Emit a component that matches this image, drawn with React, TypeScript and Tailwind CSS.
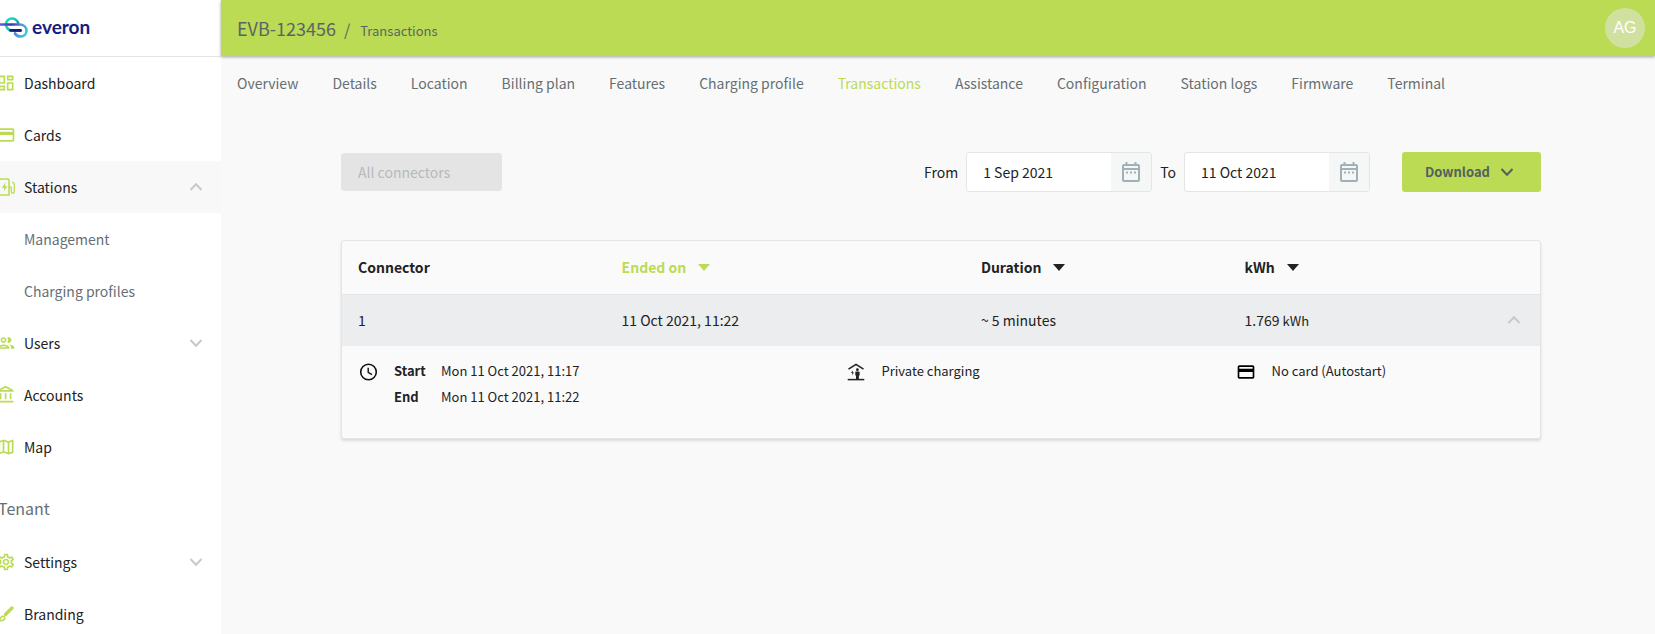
import type { ReactNode } from 'react';
import {
  MdCreditCard,
  MdOutlineAccountBalance,
  MdOutlineDashboard,
  MdOutlineMap,
  MdOutlinePeople,
  MdOutlineSettings,
} from 'react-icons/md';

function Logo() {
  return (
    <svg width="28" height="22" viewBox="0 0 28 22" fill="none" strokeLinecap="round" aria-hidden="true">
      <defs>
        <linearGradient id="loopA" x1="6" y1="2" x2="20" y2="13" gradientUnits="userSpaceOnUse">
          <stop offset="0" stopColor="#1fe0b8" />
          <stop offset="0.5" stopColor="#17c3b4" />
          <stop offset="1" stopColor="#152a86" />
        </linearGradient>
        <linearGradient id="loopB" x1="0" y1="7" x2="27" y2="20" gradientUnits="userSpaceOnUse">
          <stop offset="0" stopColor="#6a5ae6" />
          <stop offset="0.35" stopColor="#3d37a8" />
          <stop offset="0.65" stopColor="#5a8be8" />
          <stop offset="1" stopColor="#1fe0d0" />
        </linearGradient>
      </defs>
      <path d="M18 5.5C16.5 2.6 14.4 1.5 12 1.5C8.700 1.500 6 4 6 7.300C6 11 8.700 13.500 12 13.500H20.500" stroke="url(#loopA)" strokeWidth="2.600" />
      <path d="M-2 7.500H19.500C23.500 7.500 26.500 10 26.500 13.500C26.500 17 24 19.500 20.800 19.500C18 19.500 16 18.300 15 16.300" stroke="url(#loopB)" strokeWidth="2.600" />
      <path d="M10.500 13.400H20.500" stroke="#0f1f7c" strokeWidth="2.600" />
    </svg>
  );
}

function StationIcon() {
  return (
    <svg width="20" height="20" viewBox="0 0 20 20" fill="none" stroke="currentColor" strokeWidth="1.600" className="-ml-1 shrink-0" aria-hidden="true">
      <path d="M3 18V3.500C3 2.500 3.700 2 4.500 2H11.500C12.400 2 13 2.600 13 3.500V18Z" />
      <path d="M13 10H14.300C15 10 15.300 10.500 15.300 11.200V14.500C15.300 16.800 18.300 16.800 18.300 14.500V7C18.300 6 17.500 5.500 16 5" strokeWidth="1.300" />
      <path d="M9.500 5.500L5.800 10.800H8.200L7.800 14.500L11.300 9.200H9L9.500 5.500Z" fill="currentColor" stroke="none" />
    </svg>
  );
}

function BrushIcon() {
  return (
    <svg width="20" height="20" viewBox="0 0 20 20" fill="none" className="-ml-1 shrink-0" aria-hidden="true">
      <path d="M9.500 10.500L16 4" stroke="currentColor" strokeWidth="3.400" strokeLinecap="round" />
      <path d="M6.600 12.200C8.300 12.200 9 13.300 8.700 14.500C8.300 16.300 6.500 17 3 16.600C4.600 16 4.200 12.400 6.600 12.200Z" stroke="currentColor" strokeWidth="1.500" />
    </svg>
  );
}

function Chevron({ up = false, className = '' }: { up?: boolean; className?: string }) {
  return (
    <svg width="14" height="10" viewBox="0 0 14 10" fill="none" stroke="currentColor" strokeWidth="2" className={className} aria-hidden="true">
      <path d={up ? 'M1.500 8L7 2.200L12.500 8' : 'M1.500 2L7 7.800L12.500 2'} />
    </svg>
  );
}

function CalendarIcon() {
  return (
    <svg width="20" height="22" viewBox="0 0 20 22" fill="none" stroke="currentColor" strokeWidth="2" aria-hidden="true">
      <rect x="2" y="4" width="16" height="16" rx="1" />
      <path d="M5.500 1V4M14.500 1V4M2 8H18" />
      <path d="M5 11.500H7M9 11.500H11M13 11.500H15" />
    </svg>
  );
}

function ClockIcon() {
  return (
    <svg width="20" height="20" viewBox="0 0 20 20" fill="none" stroke="#111" strokeWidth="1.600" aria-hidden="true">
      <circle cx="10.500" cy="10" r="7.800" />
      <path d="M10.200 5.800V10.300L14 12.600" strokeWidth="1.400" />
    </svg>
  );
}

function PrivateIcon() {
  return (
    <svg width="20" height="20" viewBox="0 0 20 20" fill="none" stroke="#222" aria-hidden="true">
      <path d="M2.500 7.200L10 2.400L17.500 7.200" strokeWidth="1.600" />
      <path d="M1.700 17.600H18.300" strokeWidth="1.500" />
      <circle cx="11.400" cy="7.700" r="1.400" fill="#222" stroke="none" />
      <path d="M9.300 10C9.300 9.600 9.600 9.400 10 9.400H12.800C13.300 9.400 13.600 9.700 13.600 10.100V13.500H12.900V17H10V13.500H9.300Z" fill="#222" stroke="none" />
      <path d="M6.800 8.200L5 11H6.300L6 13.300L8 10.400H6.700Z" fill="#222" stroke="none" />
    </svg>
  );
}

type NavItem = {
  label: string;
  icon?: ReactNode;
  chevron?: 'up' | 'down';
  active?: boolean;
  child?: boolean;
};

const iconClass = '-ml-1 size-5 shrink-0';

const mainNav: NavItem[] = [
  { label: 'Dashboard', icon: <MdOutlineDashboard className={iconClass} /> },
  { label: 'Cards', icon: <MdCreditCard className={iconClass} /> },
  { label: 'Stations', icon: <StationIcon />, chevron: 'up', active: true },
  { label: 'Management', child: true },
  { label: 'Charging profiles', child: true },
  { label: 'Users', icon: <MdOutlinePeople className={iconClass} />, chevron: 'down' },
  { label: 'Accounts', icon: <MdOutlineAccountBalance className={iconClass} /> },
  { label: 'Map', icon: <MdOutlineMap className={iconClass} /> },
];

const tenantNav: NavItem[] = [
  { label: 'Settings', icon: <MdOutlineSettings className={iconClass} />, chevron: 'down' },
  { label: 'Branding', icon: <BrushIcon /> },
];

const tabs = [
  'Overview',
  'Details',
  'Location',
  'Billing plan',
  'Features',
  'Charging profile',
  'Transactions',
  'Assistance',
  'Configuration',
  'Station logs',
  'Firmware',
  'Terminal',
];

function NavList({ items }: { items: NavItem[] }) {
  return (
    <ul>
      {items.map((item) => (
        <li key={item.label}>
          <a href="#" className={`flex h-13 items-center pr-[18px] ${item.active ? 'bg-[#f8f8f8]' : ''}`}>
            <span className="flex w-6 shrink-0 text-[#bbdb55]">{item.icon}</span>
            <span className={item.child ? 'text-[#666f73]' : 'text-[#222]'}>{item.label}</span>
            {item.chevron && <Chevron up={item.chevron === 'up'} className="ml-auto text-[#c8c8c8]" />}
          </a>
        </li>
      ))}
    </ul>
  );
}

function DateField({ id, label, value }: { id: string; label: string; value: string }) {
  return (
    <div className="flex items-center gap-2">
      <label htmlFor={id}>{label}</label>
      <div className="flex h-10 w-[186px] overflow-hidden rounded-[3px] border border-[#e4e6e6] bg-white">
        <input id={id} type="text" defaultValue={value} className="min-w-0 flex-1 pl-4 outline-none" />
        <button type="button" aria-label={`Pick date: ${label}`} className="flex w-10 items-center justify-center bg-[#f5f6f6] text-[#9fb1b4]">
          <CalendarIcon />
        </button>
      </div>
    </div>
  );
}

function SortButton({ label, active = false }: { label: string; active?: boolean }) {
  return (
    <button type="button" className={`flex items-center gap-3 font-bold ${active ? 'text-[#bbdb55]' : 'text-[#222]'}`}>
      {label}
      <svg width="12" height="7" viewBox="0 0 12 7" fill="currentColor" aria-hidden="true">
        <path d="M0 0H12L6 7Z" />
      </svg>
    </button>
  );
}

export default function App() {
  return (
    <div className="flex h-screen overflow-hidden bg-[#f9f9f9] font-['Noto_Sans_CJK_SC','Noto_Sans',sans-serif] text-[14px] leading-6 text-[#222]">
      <aside className="w-[221px] shrink-0 overflow-hidden bg-white">
        <div className="flex h-[57px] items-center gap-1 border-b border-[#e4e4e4]">
          <Logo />
          <span className="pb-[2px] font-[Lato,sans-serif] text-[19px] font-bold text-[#14207f]">everon</span>
        </div>
        <nav aria-label="Main">
          <NavList items={mainNav} />
          <h2 className="-ml-[2px] flex h-[63px] items-center pt-[6px] text-[16px] text-[#666f73]">Tenant</h2>
          <NavList items={tenantNav} />
        </nav>
      </aside>

      <div className="flex min-w-0 flex-1 flex-col">
        <header className="flex h-14 shrink-0 items-center justify-between bg-[#bbdb55] pr-[10px] pl-4 shadow-[0_1px_3px_rgba(0,0,0,0.35)]">
          <div className="flex items-baseline gap-2 pt-[2px] text-[#5a6562]">
            <h1 className="text-[18px]">EVB-123456</h1>
            <span className="text-[16px]">/</span>
            <span className="pl-[2px] text-[13px]">Transactions</span>
          </div>
          <button type="button" className="size-10 rounded-full bg-[#d0e19f] font-['Liberation_Sans',sans-serif] text-[16px] text-white">
            AG
          </button>
        </header>

        <nav aria-label="Station" className="flex h-[54px] shrink-0 items-center gap-[34px] pl-4 whitespace-nowrap">
          {tabs.map((tab) => (
            <a key={tab} href="#" className={tab === 'Transactions' ? 'text-[#bbdb55]' : 'text-[#666f73]'}>
              {tab}
            </a>
          ))}
        </nav>

        <main className="pt-[42px] pl-[6px]">
          <div className="mx-auto max-w-[1200px]">
            <div className="flex items-center justify-between">
              <select
                disabled
                aria-label="Connector filter"
                className="h-[38px] w-[161px] appearance-none rounded-[3px] bg-[#e4e4e4] pl-[17px] text-[#b4babd] opacity-100"
              >
                <option>All connectors</option>
              </select>
              <div className="flex items-center">
                <div className="flex gap-2">
                  <DateField id="from" label="From" value="1 Sep 2021" />
                  <DateField id="to" label="To" value="11 Oct 2021" />
                </div>
                <button type="button" className="ml-8 flex h-10 w-[139px] items-center justify-center gap-[10px] rounded-[3px] bg-[#bbdb55] pr-1 text-[13px] font-bold text-[#54605f]">
                  Download
                  <Chevron />
                </button>
              </div>
            </div>

            <div className="mt-12 overflow-hidden rounded-[3px] border border-[#e4e5e6] bg-[#fafafa] shadow-[0_2px_3px_rgba(0,0,0,0.12)]">
              <table className="w-full table-fixed border-collapse text-left">
                <thead>
                  <tr className="h-[53px] border-b border-[#e2e4e5]">
                    <th className="w-[22%] px-4 font-bold">Connector</th>
                    <th className="w-[30%] px-4"><SortButton label="Ended on" active /></th>
                    <th className="w-[22%] px-4"><SortButton label="Duration" /></th>
                    <th className="w-[26%] px-4"><SortButton label="kWh" /></th>
                  </tr>
                </thead>
                <tbody>
                  <tr className="h-13 bg-[#ecedef]">
                    <td className="px-4">1</td>
                    <td className="px-4">11 Oct 2021, 11:22</td>
                    <td className="px-4">~ 5 minutes</td>
                    <td className="px-4">
                      <div className="flex items-center justify-between">
                        <span>
                          1.769 <span className="text-[13px]">kWh</span>
                        </span>
                        <button type="button" aria-label="Collapse row" className="pr-[3px] text-[#c8c9ca]">
                          <Chevron up />
                        </button>
                      </div>
                    </td>
                  </tr>
                  <tr>
                    <td colSpan={4} className="h-[92px] pt-3 pr-3 pl-4 align-top text-[13px] leading-[26px]">
                      <div className="grid grid-cols-12 items-start">
                        <div className="col-span-5 flex gap-4">
                          <span className="pt-1"><ClockIcon /></span>
                          <dl className="grid grid-cols-[47px_auto]">
                            <dt className="font-bold">Start</dt>
                            <dd>Mon 11 Oct 2021, 11:17</dd>
                            <dt className="font-bold">End</dt>
                            <dd>Mon 11 Oct 2021, 11:22</dd>
                          </dl>
                        </div>
                        <div className="col-span-4 flex gap-4">
                          <span className="pt-1"><PrivateIcon /></span>
                          Private charging
                        </div>
                        <div className="col-span-3 flex gap-4">
                          <span className="pt-1"><MdCreditCard className="size-5 text-black" /></span>
                          No card (Autostart)
                        </div>
                      </div>
                    </td>
                  </tr>
                </tbody>
              </table>
            </div>
          </div>
        </main>
      </div>
    </div>
  );
}
